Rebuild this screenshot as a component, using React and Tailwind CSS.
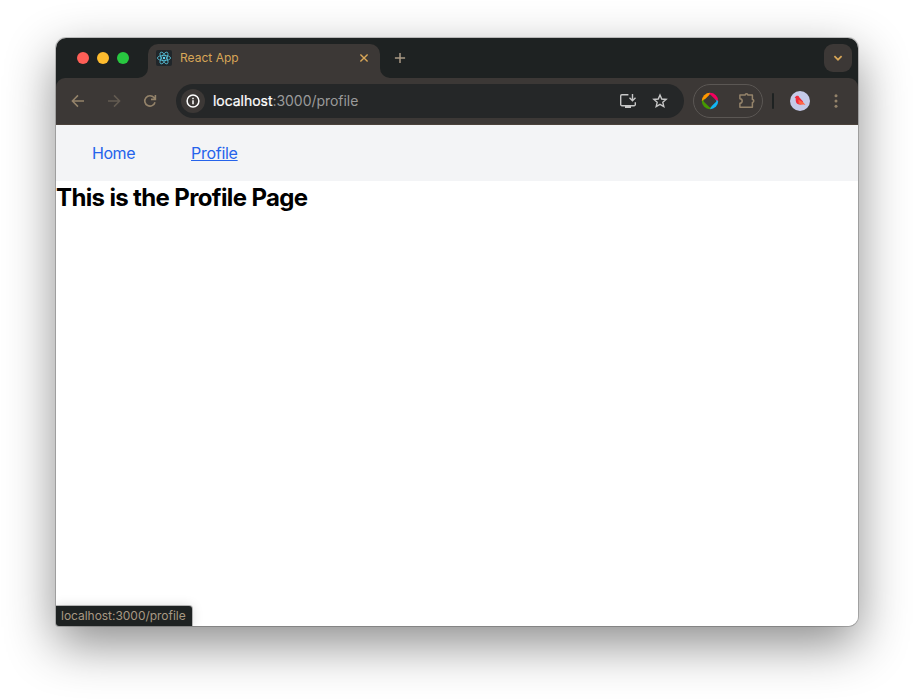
import React from "react";

function ReactLogo() {
  return (
    <svg className="size-4 shrink-0 rounded-[2px] bg-[#20262a]" viewBox="0 0 16 16" fill="none" stroke="#58c4dc" strokeWidth="0.8">
      <ellipse cx="8" cy="8" rx="6.6" ry="2.6" />
      <ellipse cx="8" cy="8" rx="6.6" ry="2.6" transform="rotate(60 8 8)" />
      <ellipse cx="8" cy="8" rx="6.6" ry="2.6" transform="rotate(120 8 8)" />
      <circle cx="8" cy="8" r="1.2" fill="#61dafb" stroke="none" />
    </svg>
  );
}

function TabStrip() {
  return (
    <div className="flex h-10 bg-[#1e2222] pt-1.5">
      <div className="flex w-[82px] gap-2 pt-2 pl-[21px]">
        <span className="size-3 rounded-full bg-[#ff5f57]" />
        <span className="size-3 rounded-full bg-[#febc2e]" />
        <span className="size-3 rounded-full bg-[#28c840]" />
      </div>
      <svg className="size-[10px] shrink-0 self-end text-[#3c3836]" viewBox="0 0 10 10">
        <path d="M10 0v10H0A10 10 0 0 0 10 0Z" fill="currentColor" />
      </svg>
      <div className="flex h-[34px] w-[232px] items-center rounded-t-[10px] bg-[#3c3836] pr-2.5 pb-1.5 pl-2">
        <ReactLogo />
        <span className="ml-2 text-[12px] leading-4 tracking-[0.02px] text-[#d8a657]">React App</span>
        <svg className="ml-auto size-3" viewBox="0 0 12 12" fill="none" stroke="#d8a657" strokeWidth="1.4">
          <path d="m2.4 2.4 7.2 7.2M9.6 2.4 2.4 9.6" />
        </svg>
      </div>
      <svg className="size-[10px] shrink-0 self-end text-[#3c3836]" viewBox="0 0 10 10">
        <path d="M0 0v10h10A10 10 0 0 1 0 0Z" fill="currentColor" />
      </svg>
      <svg className="mt-2 ml-1 size-3" viewBox="0 0 12 12" fill="none" stroke="#a89984" strokeWidth="1.5">
        <path d="M6 .9v10.2M.9 6h10.2" />
      </svg>
      <div className="mr-1.5 ml-auto flex size-7 items-center justify-center rounded-[9px] bg-[#3c3836]">
        <svg className="size-3" viewBox="0 0 12 12" fill="none" stroke="#d8a657" strokeWidth="1.7">
          <path d="m2.4 4.2 3.6 3.5 3.6-3.5" />
        </svg>
      </div>
    </div>
  );
}

function AddressBar() {
  return (
    <div className="flex h-[34px] w-[508px] items-center rounded-full bg-[#252728] pr-3.5 pl-[5px]">
      <span className="flex size-6 items-center justify-center rounded-full bg-[#3c3836]">
        <svg className="size-4" viewBox="0 0 16 16" fill="none" stroke="#fff" strokeWidth="1.5">
          <circle cx="8" cy="8" r="5.9" />
          <path d="M8 7.3v3.9M8 4.7v1.5" />
        </svg>
      </span>
      <span className="ml-2 text-[14px] leading-5 tracking-[-0.04px] text-[#9a9a9a]">
        <span className="text-white [-webkit-text-stroke:0.2px_white]">localhost</span>:3000/profile
      </span>
      <svg className="ml-auto size-5" viewBox="0 0 20 20" fill="none" stroke="#c7c7c7" strokeWidth="1.4">
        <path d="M10.4 3.7H3.9a1.2 1.2 0 0 0-1.2 1.2v8.6a1.2 1.2 0 0 0 1.2 1.2h12.2a1.2 1.2 0 0 0 1.2-1.2v-2.2" />
        <path d="M14.5 3v6.5m-3-2.7 3 3 3-3" />
        <path d="M7 15.9h6" strokeWidth="2.4" />
      </svg>
      <svg className="ml-3 size-5" viewBox="0 0 20 20" fill="none" stroke="#c7c7c7" strokeWidth="1.4">
        <path d="m10 4 1.75 4.05 4.4.38-3.34 2.9 1 4.3L10 13.35l-3.81 2.28 1-4.3-3.34-2.9 4.4-.38Z" />
      </svg>
    </div>
  );
}

function Extensions() {
  return (
    <div className="ml-[9px] flex h-[34px] w-[70px] items-center justify-between rounded-full border border-[#5b5754] pr-[5px] pl-[7px]">
      <svg className="size-[18px]" viewBox="0 0 18 18">
        <path d="M9 .8A8.2 8.2 0 0 0 .8 9l3.2 1.4L10.8 3Z" fill="#ff9800" />
        <path d="M9 .8A8.2 8.2 0 0 1 17.2 9L14.5 10.5 7.8 3.8Z" fill="#f5005e" />
        <path d="M17.2 9A8.2 8.2 0 0 1 9 17.2L7.5 14l7-6.6Z" fill="#12b5f5" />
        <path d="M9 17.2A8.2 8.2 0 0 1 .8 9l2.6-1.9 7.2 7Z" fill="#459800" />
        <path d="M9 3.6 14.4 9 9 14.4 3.6 9Z" fill="#3c3836" stroke="#3c3836" strokeWidth="2" strokeLinejoin="round" />
      </svg>
      <svg className="size-5" viewBox="0 0 20 20" fill="none" stroke="#94836a" strokeWidth="1.5" strokeLinejoin="round">
        <path d="M3.7 4h4.5a1.3 1.3 0 0 1 2.6 0h4.6v4.6a1.4 1.4 0 0 1 0 2.8v4.9H2.9v-4a2.3 2.3 0 0 0 0-4.6V4Z" />
      </svg>
    </div>
  );
}

function Toolbar() {
  return (
    <div className="bg-[#1e2222]">
      <div className="flex h-[47px] items-center rounded-t-[9px] border-b border-[#4b423b] bg-[#3c3836] px-3">
        <div className="flex gap-4 pr-4">
          <svg className="size-5" viewBox="0 0 20 20" fill="none" stroke="#94836a" strokeWidth="1.5">
            <path d="M16 10H4.8M10 4.4 4.4 10l5.6 5.6" />
          </svg>
          <svg className="size-5" viewBox="0 0 20 20" fill="none" stroke="#635b51" strokeWidth="1.5">
            <path d="M4 10h11.2M10 4.4l5.6 5.6-5.6 5.6" />
          </svg>
          <svg className="size-5" viewBox="0 0 20 20" fill="none" stroke="#94836a" strokeWidth="1.6">
            <path d="M15 11.2A5.2 5.2 0 1 1 14 6.6l1.1 1.2M15.4 4v4.4H11" />
          </svg>
        </div>
        <AddressBar />
        <Extensions />
        <span className="ml-[9px] h-4 w-0.5 rounded-full bg-[#1e2222]" />
        <svg className="ml-4 size-5" viewBox="0 0 20 20">
          <circle cx="10" cy="10" r="10" fill="#c5cae9" />
          <path d="M4.6 6.6 6 5.3c1.3-.9 2.8-.3 3.2.9l3.9 4.4-2.2 3c-3.4.3-5.2-1.7-5.2-4.4V7.2Z" fill="#f02d3e" />
          <path d="m8.4 8.8 4.8 2.4 2.3 2.8-2-.4-2.3.2-2.5-1.3Z" fill="#ff6545" />
        </svg>
        <svg className="ml-4 size-5" viewBox="0 0 20 20" fill="#94836a">
          <circle cx="10" cy="4.7" r="1.5" />
          <circle cx="10" cy="10" r="1.5" />
          <circle cx="10" cy="15.3" r="1.5" />
        </svg>
      </div>
    </div>
  );
}

function ProfilePage() {
  return (
    <div className="flex-1 bg-white">
      <nav className="flex h-14 items-center gap-14 bg-[#f3f4f6] px-9 text-base text-[#2563eb]">
        <a href="#home" className="tracking-[-0.45px]">Home</a>
        <a href="#profile" className="tracking-[-0.28px] underline">Profile</a>
      </nav>
      <h1 className="pt-px text-2xl leading-8 font-bold tracking-[-0.64px] text-black">This is the Profile Page</h1>
    </div>
  );
}

export default function App() {
  return (
    <div className="h-[700px] w-[914px] overflow-hidden bg-white px-14 pt-[38px] font-['Inter','Liberation_Sans',sans-serif]">
      <div className="relative flex h-[588px] w-[802px] flex-col overflow-hidden rounded-[10px] rounded-bl-[3px] shadow-[0_0_0_1px_rgba(0,0,0,0.2),0_18px_50px_rgba(0,0,0,0.46)]">
        <TabStrip />
        <Toolbar />
        <ProfilePage />
        <div className="absolute bottom-0 left-0 flex h-5 w-[136px] items-center rounded-tr-[3px] bg-[#1e2222] pl-[5px] text-[12px] tracking-[-0.03px] text-[#a89984] shadow-[0_0_0_1px_rgba(0,0,0,0.25),0_0_12px_rgba(0,0,0,0.15)]">
          localhost:3000/profile
        </div>
      </div>
    </div>
  );
}
